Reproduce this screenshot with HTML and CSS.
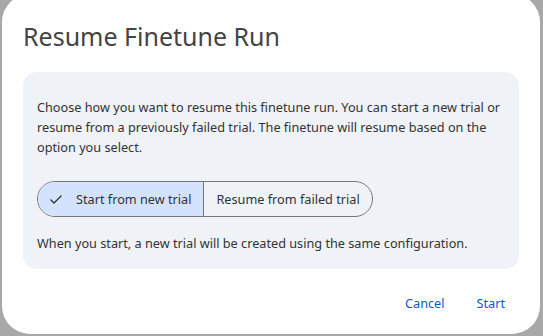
FILE: index.html
```html
<!DOCTYPE html>
<html lang="en">
<head>
    <meta charset="UTF-8">
    <meta name="viewport" content="width=device-width, initial-scale=1.0">
    <title>Resume Finetune Run</title>
    <link rel="stylesheet" href="styles.css">
</head>
<body>
    <div class="dialog">
        <h1 class="dialog-title">Resume Finetune Run</h1>
        <div class="panel">
            <p class="intro">Choose how you want to resume this finetune run. You can start a new trial or resume from a previously failed trial. The finetune will resume based on the option you select.</p>
            <div class="segmented">
                <button class="segment selected">
                    <svg class="check" width="16" height="16" viewBox="0 0 16 16">
                        <path d="M2.5 8.5 L6 12 L13.5 4.5" fill="none" stroke="#333" stroke-width="1.3"/>
                    </svg>
                    Start from new trial
                </button>
                <button class="segment">Resume from failed trial</button>
            </div>
            <p class="hint">When you start, a new trial will be created using the same configuration.</p>
        </div>
        <div class="actions">
            <button class="text-btn">Cancel</button>
            <button class="text-btn">Start</button>
        </div>
    </div>
</body>
</html>
```
FILE: styles.css
```css
body {
    margin: 0;
    background-color: #a8a8a8;
    font-family: 'Noto Sans', sans-serif;
    color: #333;
    height: 336px;
    overflow: hidden;
}
.dialog {
    background-color: #fff;
    margin: -6px 3px 0 2px;
    height: 340px;
    box-sizing: border-box;
    border-radius: 28px;
    padding: 26px 21px 0 21px;
}
.dialog-title {
    margin: 0;
    font-size: 25px;
    font-weight: 400;
    color: #444;
    line-height: 32px;
}
.panel {
    margin-top: 20px;
    background-color: #eff2f7;
    border-radius: 14px;
    padding: 25px 14px 16px 14px;
}
.intro {
    margin: 0;
    font-size: 12.7px;
    line-height: 20px;
}
.segmented {
    display: inline-flex;
    margin-top: 24px;
    border: 1px solid #777;
    border-radius: 19px;
    overflow: hidden;
    height: 36px;
    box-sizing: border-box;
}
.segment {
    display: flex;
    align-items: center;
    gap: 12px;
    border: none;
    background: transparent;
    font-family: inherit;
    font-size: 12.7px;
    color: #333;
    padding: 0 12px;
}
.segment + .segment {
    border-left: 1px solid #777;
}
.segment.selected {
    background-color: #d3e3fd;
    padding-left: 10px;
}
.hint {
    margin: 16px 0 0 0;
    font-size: 12.7px;
    line-height: 20px;
}
.actions {
    display: flex;
    justify-content: flex-end;
    gap: 32px;
    padding: 25px 14px 0 0;
}
.text-btn {
    border: none;
    background: transparent;
    font-family: inherit;
    font-size: 12.7px;
    line-height: 18px;
    color: #0b57d0;
    padding: 0;
}
```
